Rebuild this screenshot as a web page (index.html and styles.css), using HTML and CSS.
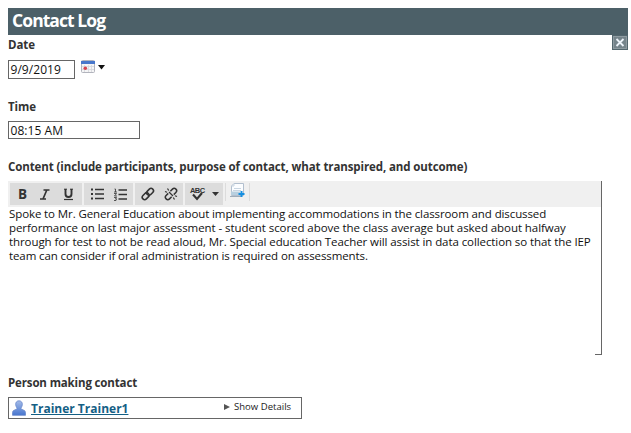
FILE: index.html
```html
<!DOCTYPE html>
<html lang="en">
<head>
<meta charset="utf-8">
<title>Contact Log</title>
<link rel="stylesheet" href="styles.css">
</head>
<body>
<main class="panel">
  <header class="title"><h1>Contact Log</h1>
    <button class="close" aria-label="Close"><svg width="16" height="15" viewBox="0 0 16 15"><rect x=".5" y=".5" width="15" height="14" fill="#75848b" stroke="#53666e"/><rect x="1.5" y="1.5" width="13" height="12" fill="none" stroke="#8e9ba1"/><path d="M4.5 4l7 7m0-7l-7 7" stroke="#edf3fa" stroke-width="1.8"/></svg></button>
  </header>
  <section class="field date">
    <div class="label">Date</div>
    <div class="row">
      <div class="input short">9/9/2019</div>
      <svg class="cal" width="25" height="14" viewBox="0 0 25 14"><rect x=".5" y=".5" width="13" height="12" rx="1" fill="#f5f5f6" stroke="#b2b4bd"/><path d="M0 1h14v3H0z" fill="#4877cb"/><path d="M3.500 5v7M7.500 5v7M10.500 5v7M1 6.500h12M1 9.500h12" stroke="#d5d7dc" stroke-width=".8"/><circle cx="4.300" cy="8.300" r="1.800" fill="#d64550"/><path d="M17 5h7l-3.500 4.500z" fill="#111"/></svg>
    </div>
  </section>
  <section class="field time">
    <div class="label">Time</div>
    <div class="input long">08:15 AM</div>
  </section>
  <section class="field content">
    <div class="label">Content (include participants, purpose of contact, what transpired, and outcome)</div>
    <div class="editor">
      <div class="toolbar">
        <div class="group g1"><span class="b">B</span><svg width="12" height="13" viewBox="0 0 12 13"><path d="M4.500 2h6M1 11h6M7.800 2L4 11" fill="none" stroke="#333" stroke-width="1.700"/></svg><svg width="11" height="13" viewBox="0 0 11 13"><path d="M2.500 1v5c0 4 6 4 6 0V1" fill="none" stroke="#333" stroke-width="1.900"/><path d="M1 1.200h3M7 1.200h3" stroke="#333"/><path d="M1 11.500h9" stroke="#333" stroke-width="1.200"/></svg></div>
        <div class="group g2"><svg width="13" height="12" viewBox="0 0 13 12"><path d="M4 1.500h9M4 6h9M4 10.500h9" stroke="#333" stroke-width="1.300"/><path d="M0 1.500h2M0 6h2M0 10.500h2" stroke="#333" stroke-width="2"/></svg><svg width="13" height="13" viewBox="0 0 13 13"><path d="M4.500 2h8.500M4.500 6.500h8.500M4.500 11h8.500" stroke="#333" stroke-width="1.400"/><path d="M.5 1h1v3M0 4h3M0 5.500h2.500L.5 8H3M0 9.500h2.500l-1 1.300h1L2 12.500H0" fill="none" stroke="#333" stroke-width=".8"/></svg></div>
        <div class="group g3"><svg width="14" height="14" viewBox="0 0 14 14"><g transform="rotate(-45 7 7)" fill="none" stroke="#333" stroke-width="1.600"><rect x="0" y="4.500" width="7.600" height="4.800" rx="2.400"/><rect x="6.200" y="4.500" width="7.600" height="4.800" rx="2.400"/></g></svg><svg width="14" height="14" viewBox="0 0 14 14"><g transform="rotate(-45 7 7)" fill="none" stroke="#333" stroke-width="1.500"><path d="M5.500 4.600h-3a2.400 2.400 0 0 0 0 4.800h3M8.500 4.600h3a2.400 2.400 0 0 1 0 4.800h-3"/></g><path d="M3.500 1.500l1.200 2M1 4.500l2 .8M10.500 12.500l-1.200-2M13 9.500l-2-.8M5 5l4 4" stroke="#333" stroke-width="1.200"/></svg></div>
        <div class="group g4"><span class="spell">ABC<svg width="14" height="9" viewBox="0 0 14 9"><path d="M3 2.500l4 4.500 5-6" fill="none" stroke="#333" stroke-width="2.100"/></svg></span><svg class="drop" width="7" height="4" viewBox="0 0 7 4"><path d="M0 0h7L3.500 4z" fill="#333"/></svg></div>
        <div class="group g5"><svg width="16" height="15" viewBox="0 0 16 15"><path d="M4 .5h9.500v12H1.500V3z" fill="#fbfdff" stroke="#b2bfce"/><path d="M1.500 3H4V.5M4 5.500h7M3 7.500h8" fill="none" stroke="#c8d5e1"/><path d="M1 8.500h9v3.500H1z" fill="#b8cfdf"/><path d="M0 13.500h12" stroke="#9eacb9"/><path d="M11.500 8v6M8.500 11h6" stroke="#168fe0" stroke-width="2"/></svg></div>
      </div>
      <div class="text">
        <div class="t1">Spoke to Mr. General Education about implementing accommodations in the classroom and discussed</div>
        <div class="t2">performance on last major assessment - student scored above the class average but asked about halfway</div>
        <div class="t3">through for test to not be read aloud, Mr. Special education Teacher will assist in data collection so that the IEP</div>
        <div class="t4">team can consider if oral administration is required on assessments.</div>
      </div>
      <i class="corner"></i>
    </div>
  </section>
  <section class="field person">
    <div class="label">Person making contact</div>
    <div class="contact">
      <svg width="14" height="16" viewBox="0 0 14 16"><defs><linearGradient id="u" x2="0" y2="1"><stop stop-color="#a5bce9"/><stop offset="1" stop-color="#4675cf"/></linearGradient></defs><path d="M7 .8c2.300 0 3.600 1.700 3.300 4C10.100 6.800 9 7.500 9 8.800c0 1 4.500.8 4.500 3.700v2.800H.5v-2.800C.5 9.600 5 9.800 5 8.800c0-1.300-1.100-2-1.300-4C3.400 2.500 4.700.8 7 .8z" fill="url(#u)" stroke="#6888ca" stroke-width=".8"/></svg>
      <div class="who"><a class="name">Trainer Trainer1</a></div>
      <div class="details"><svg width="6" height="6" viewBox="0 0 6 6"><path d="M0 0l6 3-6 3z" fill="#555"/></svg><span>Show Details</span></div>
    </div>
  </section>
</main>
</body>
</html>
```
FILE: styles.css
```css
* { box-sizing: border-box; }
body { margin: 0; background: #fff; font-family: "Open Sans", sans-serif; color: #111; overflow: hidden; }
.panel { width: 620px; margin: 8px 0 0 8px; white-space: nowrap; }
.title { position: relative; height: 27px; background: #4c6068; color: #fff; padding-left: 4px; }
h1 { margin: 0; font-size: 17.5px; line-height: 25px; font-weight: 700; letter-spacing: -.93px; }
.close { position: absolute; right: 0; top: 27px; width: 16px; height: 15px; padding: 0; border: 0; background: none; }
svg { display: block; flex: none; }
.label { font-size: 11.5px; line-height: 20px; height: 25px; font-weight: 700; color: #333; letter-spacing: -.1px; }
.date { height: 62px; }
.time { height: 60px; }
.content { height: 216px; }
.row { display: flex; }
.input { border: 1px solid #666; padding-left: 1.5px; font-size: 12px; color: #111; }
.short { width: 67px; height: 19px; line-height: 18px; letter-spacing: .05px; }
.long { width: 132px; height: 18px; line-height: 18px; margin-top: -1px; letter-spacing: .05px; }
.cal { margin: 0 0 0 6px; }
.content .label { height: 24px; }
.editor { position: relative; width: 594px; height: 174px; border-right: 1px solid #666; }
.corner { position: absolute; right: 0; bottom: 0; width: 6px; height: 1px; background: #666; }
.toolbar { height: 26px; background: #f0f0f0; padding: 2px; display: flex; gap: 2px; }
.group { height: 22px; background: #dcdcdc; display: flex; align-items: center; }
.g1 { width: 72px; padding-left: 8px; gap: 12px; }
.g2 { width: 49px; padding-left: 7px; gap: 10px; }
.g3 { width: 48px; padding-left: 6px; gap: 9px; }
.g4 { width: 38px; padding-left: 5px; gap: 7px; }
.g5 { width: 25px; background: none; border: solid #dcdcdc; border-width: 0 1px; padding-left: 4px; align-items: flex-start; height: 18px; }
.b { font-family: "Open Sans", sans-serif; font-size: 13.5px; font-weight: 700; color: #333; width: 9px; line-height: 22px; }
.spell { font-family: "Liberation Sans", sans-serif; font-size: 7.5px; line-height: 7px; height: 14px; font-weight: 700; color: #333; width: 15px; letter-spacing: -.6px; }
.spell svg { margin-top: -2px; }
.text { padding-left: 1px; font-size: 11.5px; line-height: 14.3px; margin-top: -.5px; }
.t1 { letter-spacing: -.105px; }
.t2 { letter-spacing: -.07px; }
.t3 { letter-spacing: -.085px; }
.t4 { letter-spacing: -.105px; }
.person { height: 48px; }
.person .label { line-height: 19px; letter-spacing: -.14px; }
.contact { width: 294px; height: 22px; border: 1px solid #666; display: flex; padding: 2px 0 0 3px; margin-top: -1px; }
.who { width: 193px; margin-left: 5px; font-size: 12px; line-height: 17px; }
.name { font-weight: 700; color: #146085; text-decoration: underline; }
.details { display: flex; align-items: flex-start; gap: 4px; font-size: 9.5px; line-height: 14px; color: #222; letter-spacing: .03px; }
.details svg { margin-top: 4px; }
```
